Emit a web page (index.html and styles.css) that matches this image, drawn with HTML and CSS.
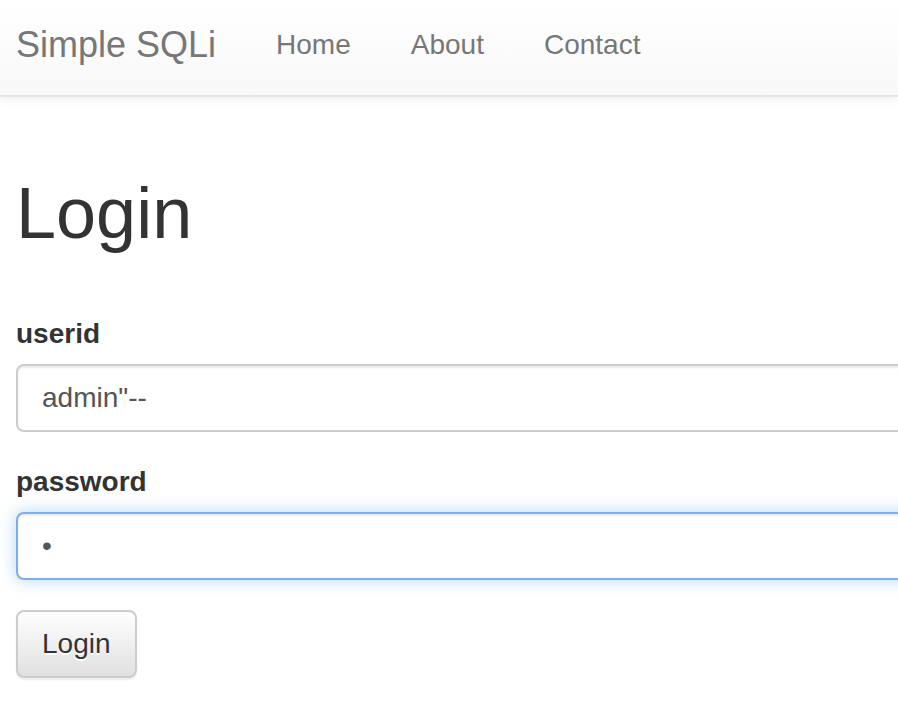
FILE: index.html
```html
<!DOCTYPE html>
<html lang="en">
<head>
<meta charset="utf-8">
<title>Simple SQLi</title>
<link rel="stylesheet" href="styles.css">
</head>
<body>
<nav class="navbar">
  <a class="brand" href="#">Simple SQLi</a>
  <ul class="nav">
    <li><a href="#">Home</a></li>
    <li><a href="#">About</a></li>
    <li><a href="#">Contact</a></li>
  </ul>
</nav>
<main class="main">
  <h1 class="title">Login</h1>
  <form class="form">
    <div class="form-group">
      <label class="label" for="userid">userid</label>
      <input class="input" id="userid" type="text" value="admin&quot;--">
    </div>
    <div class="form-group">
      <label class="label" for="password">password</label>
      <input class="input input-focus" id="password" type="password" value="a">
    </div>
    <div class="form-group">
      <button class="btn" type="button">Login</button>
    </div>
  </form>
</main>
</body>
</html>
```
FILE: styles.css
```css
html, body {
  margin: 0;
  padding: 0;
  overflow: hidden;
  background: #fff;
}
body {
  font-family: "Liberation Sans", Arial, Helvetica, sans-serif;
  color: #333;
  width: 898px;
  height: 727px;
}
.navbar {
  display: flex;
  align-items: flex-start;
  height: 40px;
  padding: 25px 0 30px 16px;
  background: linear-gradient(to bottom, #ffffff 0%, #f8f8f8 100%);
  border-bottom: 2px solid #e7e7e7;
  box-shadow: 0 2px 10px rgba(0, 0, 0, 0.075);
}
.brand {
  font-size: 36px;
  line-height: 40px;
  color: #777;
  text-decoration: none;
  padding-right: 30px;
}
.nav {
  display: flex;
  list-style: none;
  margin: 0;
  padding: 0;
}
.nav a {
  display: block;
  font-size: 28px;
  line-height: 40px;
  padding: 0 30px;
  color: #777;
  text-decoration: none;
}
.main {
  padding-left: 16px;
}
.title {
  font-size: 72px;
  font-weight: 500;
  line-height: 79px;
  margin: 77px 0 0;
  color: #333;
}
.form {
  margin-top: 61px;
}
.form-group {
  margin-bottom: 30px;
}
.label {
  display: block;
  font-size: 28px;
  font-weight: bold;
  line-height: 40px;
  margin-bottom: 10px;
  color: #333;
}
.input {
  display: block;
  box-sizing: border-box;
  width: 1200px;
  height: 68px;
  padding: 12px 24px;
  font-family: "Liberation Sans", Arial, Helvetica, sans-serif;
  font-size: 28px;
  line-height: 40px;
  color: #555;
  background: #fff;
  border: 2px solid #ccc;
  border-radius: 8px;
  box-shadow: inset 0 2px 2px rgba(0, 0, 0, 0.075);
  outline: none;
  margin: 0;
}
.input-focus {
  border-color: #7eaee8;
  box-shadow: inset 0 2px 2px rgba(0, 0, 0, 0.075), 0 0 16px rgba(102, 175, 233, 0.5);
}
.btn {
  display: inline-block;
  box-sizing: border-box;
  height: 68px;
  padding: 12px 24px;
  font-family: "Liberation Sans", Arial, Helvetica, sans-serif;
  font-size: 28px;
  line-height: 40px;
  color: #333;
  background: linear-gradient(to bottom, #ffffff 0%, #e0e0e0 100%);
  border: 2px solid #ccc;
  border-radius: 8px;
  text-shadow: 0 2px 0 #fff;
  box-shadow: inset 0 2px 0 rgba(255, 255, 255, 0.15), 0 2px 2px rgba(0, 0, 0, 0.075);
  margin: 0;
  cursor: pointer;
}
```
